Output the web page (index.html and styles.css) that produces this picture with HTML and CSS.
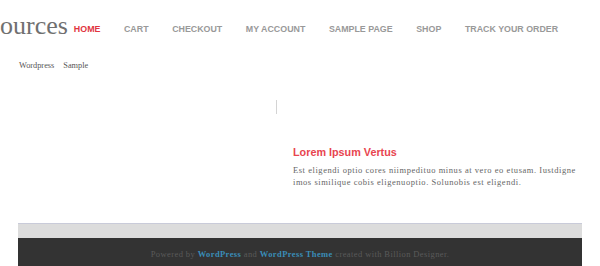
FILE: index.html
```html
<!DOCTYPE html>
<html>
<head>
<meta charset="utf-8">
<link rel="stylesheet" href="styles.css">
</head>
<body>
<header class="header">
  <div class="logo">Resources</div>
  <ul class="nav">
    <li class="nav-item active">HOME</li>
    <li class="nav-item">CART</li>
    <li class="nav-item">CHECKOUT</li>
    <li class="nav-item">MY ACCOUNT</li>
    <li class="nav-item">SAMPLE PAGE</li>
    <li class="nav-item">SHOP</li>
    <li class="nav-item">TRACK YOUR ORDER</li>
  </ul>
</header>
<ul class="subnav">
  <li>Wordpress</li>
  <li>Sample</li>
</ul>
<main class="main">
  <div class="col-left"></div>
  <div class="col-right">
    <div class="divider"></div>
    <h2 class="title">Lorem Ipsum Vertus</h2>
    <p class="text">Est eligendi optio cores niimpedituo minus at vero eo etusam. Iustdigne imos similique cobis eligenuoptio. Solunobis est eligendi.</p>
  </div>
</main>
<footer class="footer">
  <div class="footer-band"></div>
  <div class="footer-dark">Powered by <a class="flink">WordPress</a> and <a class="flink">WordPress Theme</a> created with Billion Designer.</div>
</footer>
</body>
</html>
```
FILE: styles.css
```css
html, body {
  margin: 0;
  padding: 0;
  background: #fff;
  overflow: hidden;
}
.header {
  display: flex;
  align-items: flex-start;
  height: 39px;
}
.logo {
  font-family: "Liberation Serif", serif;
  font-size: 26px;
  line-height: 26px;
  color: #707070;
  margin-top: 13px;
  margin-left: -39px;
  white-space: nowrap;
}
.nav {
  display: flex;
  list-style: none;
  margin: 24px 0 0 6px;
  padding: 0;
  gap: 23.6px;
}
.nav-item {
  font-family: "Liberation Sans", Arial, sans-serif;
  font-weight: bold;
  font-size: 8.85px;
  line-height: 10px;
  color: #999;
  white-space: nowrap;
}
.nav-item.active {
  color: #e1353f;
}
.subnav {
  display: flex;
  list-style: none;
  margin: 22px 0 0 0;
  padding: 0 0 0 19px;
  gap: 9px;
  font-family: "Liberation Serif", serif;
  font-size: 8.3px;
  line-height: 10px;
  color: #555;
}
.main {
  display: grid;
  grid-template-columns: 258px 1fr;
  margin: 29px 18px 0 18px;
}
.col-right {
  display: flex;
  flex-direction: column;
}
.divider {
  width: 0;
  height: 14px;
  border-left: 1px solid #d4d4d4;
}
.title {
  margin: 32px 0 0 17px;
  font-family: "Liberation Sans", Arial, sans-serif;
  font-weight: bold;
  font-size: 10.8px;
  line-height: 13px;
  color: #e8454f;
}
.text {
  margin: 5px 0 0 17px;
  font-family: "Liberation Serif", serif;
  font-size: 8.5px;
  line-height: 12px;
  letter-spacing: 0.55px;
  color: #666;
}
.footer {
  margin: 35px 18px 0 18px;
}
.footer-band {
  height: 14px;
  background: #dcdcdc;
  border-top: 1px solid #c9cbd9;
}
.footer-dark {
  background: #333;
  height: 40px;
  padding-top: 10px;
  text-align: center;
  font-family: "Liberation Serif", serif;
  font-size: 8.5px;
  line-height: 12px;
  letter-spacing: 0.4px;
  color: #5a5a5a;
}
.flink {
  color: #3a8db8;
  font-weight: bold;
}
```
